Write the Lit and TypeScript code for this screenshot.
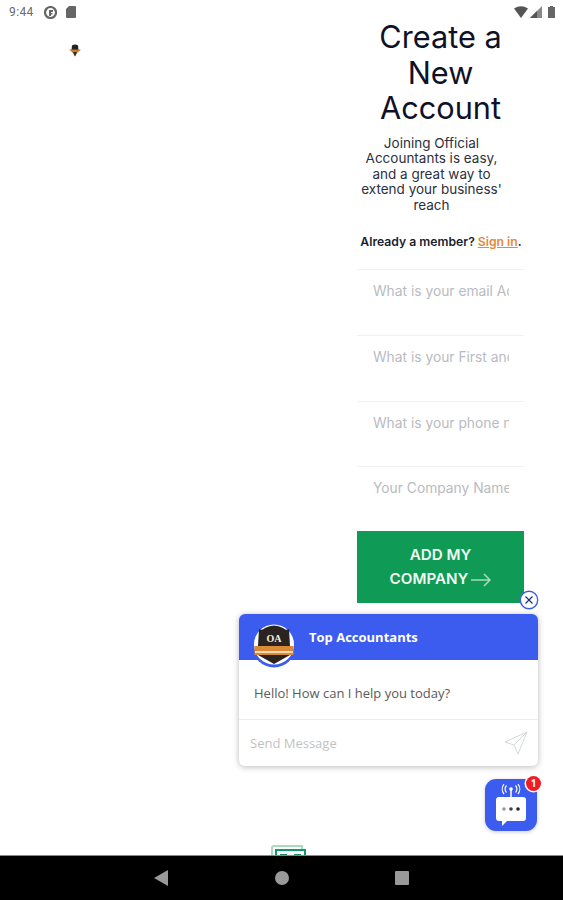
import { LitElement, html, css } from "lit";
import { customElement } from "lit/decorators.js";

@customElement("app-root")
export class AppRoot extends LitElement {
  static styles = css`
    :host { display: block; width: 563px; height: 900px; position: relative; overflow: hidden; background: #fff; font-family: Inter, "Noto Sans", sans-serif; }
    .page { height: 900px; display: flex; flex-direction: column; }
    .status { height: 24px; flex: none; display: flex; align-items: center; justify-content: space-between; padding: 0 8px 0 9px; color: #6a6a6a; box-sizing: border-box; }
    .status-left, .status-right { display: flex; align-items: center; }
    .time { font: 400 12px Roboto, sans-serif; letter-spacing: .4px; margin-right: 10px; }
    .status-left svg { margin-right: 9px; }
    .status-right svg:nth-child(1) { margin-right: 2px; }
    .status-right svg:nth-child(2) { margin-right: 6px; }
    .content { flex: 1; min-height: 0; position: relative; display: flex; justify-content: flex-end; padding-right: 39px; }
    .logo { position: absolute; left: 68px; top: 20px; }
    .money { position: absolute; left: 271px; bottom: -5px; }
    .form { width: 167px; display: flex; flex-direction: column; align-items: stretch; text-align: center; color: #10142a; }
    h1 { margin: -5px 0 0; font: 400 30.700px/35.500px Inter, sans-serif; color: #0f1226; padding: 0 6px; }
    .desc { margin: 10px 0 0; font: 400 13.500px/15.500px Inter, sans-serif; color: #2c3040; padding: 0 21px 0 3px; }
    .member { margin: 21px -6px 0 -6px; font: 600 12.200px/15px Inter, sans-serif; white-space: nowrap; color: #1a1d30; padding-left: 1px; }
    .member a { color: #e8873a; text-decoration: underline; }
    .fields { margin-top: 20px; }
    .field { height: 66px; border-top: 1px solid #f1f1f1; box-sizing: border-box; padding: 13px 15px 0 16px; text-align: left; }
    .field div { font: 400 13.800px/17px Inter, sans-serif; color: #b9bbbf; white-space: nowrap; overflow: hidden; }
    .field.last, .field.tight { height: 65px; }
    button.cta { display: block; width: 167px; height: 72px; border: 0; padding: 0; background: #0f9a55; color: #f2faf5; font: 600 15.200px/24px Inter, sans-serif; }
    .cta svg { vertical-align: -3px; margin-left: 3px; }
    .nav { height: 45px; flex: none; background: #000; border-top: 1px solid #888; box-sizing: border-box; display: flex; align-items: center; justify-content: center; gap: 106px; position: relative; z-index: 2; }
    .close { position: absolute; left: 519px; top: 590px; width: 20px; height: 20px; z-index: 3; }
    .chat { position: absolute; left: 239px; top: 614px; width: 299px; height: 152px; background: #fff; border-radius: 6px; box-shadow: 0 1px 6px rgba(0,0,0,.28); font-family: "Open Sans", sans-serif; display: flex; flex-direction: column; z-index: 1; }
    .chat-head { height: 46px; flex: none; box-sizing: border-box; background: #3c5cf0; border-radius: 6px 6px 0 0; color: #fff; font-weight: 700; font-size: 13px; line-height: 46px; padding-left: 70px; }
    .avatar { position: absolute; left: 13px; top: 10px; width: 44px; height: 44px; }
    .msg { height: 60px; flex: none; box-sizing: border-box; padding: 25px 0 0 15px; border-bottom: 1px solid #eee; font-size: 13px; line-height: 17px; color: #5a5a5a; }
    .input { flex: 1; display: flex; align-items: center; justify-content: space-between; padding: 0 10px 0 11px; font-size: 13px; color: #c2c2c2; }
    .fab { position: absolute; left: 485px; top: 779px; width: 52px; height: 52px; border-radius: 11px; background: #3c5cf0; box-shadow: 0 1px 4px rgba(0,0,0,.2); display: flex; align-items: center; justify-content: center; z-index: 1; }
    .badge { position: absolute; right: -4px; top: -3px; width: 15px; height: 15px; border-radius: 50%; background: #ee1c25; color: #fff; font: 700 10px/15px "Open Sans", sans-serif; text-align: center; box-shadow: 0 0 0 1.500px #fff; }
  `;

  render() {
    return html`
      <div class="page">
        <div class="status">
          <div class="status-left">
            <span class="time">9:44</span>
            <svg width="13" height="13" viewBox="0 0 13 13"><circle cx="6.500" cy="6.500" r="5.500" fill="none" stroke="#666" stroke-width="2.200"/><path d="M5 10V4h4v2H7v1h1.500v1.500H7V10z" fill="#666"/></svg>
            <svg width="10" height="12" viewBox="0 0 10 12"><path d="M3 0h6a1 1 0 0 1 1 1v10a1 1 0 0 1-1 1H1a1 1 0 0 1-1-1V3z" fill="#666"/></svg>
          </div>
          <div class="status-right">
            <svg width="14" height="12" viewBox="0 0 14 12"><path d="M0 2.500Q7-2 14 2.500L7 12z" fill="#555"/></svg>
            <svg width="12" height="12" viewBox="0 0 12 12"><path d="M0 12L12 0v12z" fill="#888"/><path d="M7 5v7H0z" fill="#555"/></svg>
            <svg width="7" height="12" viewBox="0 0 7 12"><path d="M2 0h3v1h2v11H0V1h2z" fill="#666"/></svg>
          </div>
        </div>
        <div class="content">
          <svg class="logo" width="14" height="13" viewBox="0 0 14 13">
            <path d="M4 1.500Q7-.5 10 1.500L10.500 6H3.500z" fill="#222"/>
            <path d="M1 5.500h12L9.500 8.500 7 12.500 4.500 8.500z" fill="#c9772c"/>
            <path d="M5 8h4l-2 4.500z" fill="#333"/>
          </svg>
          <svg class="money" width="36" height="15" viewBox="0 0 36 15">
            <path d="M1 15V3a2 2 0 0 1 2-2h28v3" fill="none" stroke="#a9d9bf" stroke-width="2"/>
            <rect x="5" y="5" width="29" height="12" fill="none" stroke="#0f9a6a" stroke-width="2"/>
            <rect x="9" y="9" width="7" height="6" fill="#1c8a5c"/><rect x="23" y="9" width="7" height="6" fill="#1c8a5c"/>
          </svg>
          <div class="form">
            <h1>Create a New Account</h1>
            <p class="desc">Joining Official Accountants is easy, and a great way to extend your business' reach</p>
            <div class="member">Already a member? <a>Sign in</a>.</div>
            <div class="fields">
              <div class="field"><div>What is your email Address</div></div>
              <div class="field"><div>What is your First and Last Name</div></div>
              <div class="field tight"><div>What is your phone number</div></div>
              <div class="field last"><div>Your Company Name</div></div>
            </div>
            <button class="cta">ADD MY<br />COMPANY<svg width="20" height="14" viewBox="0 0 20 14"><path d="M0 7h19M13 1l6 6-6 6" fill="none" stroke="#a8dcbd" stroke-width="1.500"/></svg></button>
          </div>
        </div>
        <div class="nav">
          <svg width="15" height="16" viewBox="0 0 15 16"><path d="M14 0v16L0 8z" fill="#999"/></svg>
          <svg width="14" height="14" viewBox="0 0 14 14"><circle cx="7" cy="7" r="7" fill="#999"/></svg>
          <svg width="14" height="14" viewBox="0 0 14 14"><rect width="14" height="14" rx="1" fill="#999"/></svg>
        </div>
      </div>

      <svg class="close" viewBox="0 0 20 20"><circle cx="10" cy="10" r="8.700" fill="#fff" stroke="#3c5cf0" stroke-width="1.400"/><path d="M6.500 6.500l7 7M13.500 6.500l-7 7" stroke="#1f2f80" stroke-width="1.200"/></svg>

      <div class="chat">
        <div class="chat-head">Top Accountants</div>
        <svg class="avatar" viewBox="0 0 44 44">
          <circle cx="22" cy="22" r="21.500" fill="#3c5cf0"/>
          <circle cx="22" cy="20.500" r="20" fill="#fff"/>
          <path d="M7 5Q10 7 13 4Q22-1 31 4Q34 7 37 5L38 22H6z" fill="#2b2320"/>
          <path d="M2.500 22H41.500V31H2.500z" fill="#d98a36"/>
          <path d="M3 27H41V29H3z" fill="#f3d9b0"/>
          <path d="M6 31H38L22 40z" fill="#2b2320"/>
          <text x="22" y="18" text-anchor="middle" font-family="Liberation Serif, serif" font-weight="700" font-size="10" fill="#f4f0e8">OA</text>
        </svg>
        <div class="msg">Hello! How can I help you today?</div>
        <div class="input">
          <span>Send Message</span>
          <svg width="24" height="24" viewBox="0 0 24 24"><path d="M1 11L23 1 14 23 10 14zM10 14L23 1" fill="none" stroke="#d5d8d8" stroke-width="1"/></svg>
        </div>
      </div>

      <div class="fab">
        <svg width="34" height="44" viewBox="0 0 34 44">
          <path d="M17 6v8" stroke="#fff" stroke-width="1.500"/>
          <circle cx="17" cy="6" r="1.800" fill="#fff"/>
          <path d="M12.500 2.500a5 5 0 0 0 0 7M21.500 2.500a5 5 0 0 1 0 7M10 1a8 8 0 0 0 0 10M24 1a8 8 0 0 1 0 10" fill="none" stroke="#fff" stroke-width="1.200"/>
          <path d="M5 14h24a3 3 0 0 1 3 3v18a3 3 0 0 1-3 3H13l-5 5v-5H5a3 3 0 0 1-3-3V17a3 3 0 0 1 3-3z" fill="#fff"/>
          <circle cx="10" cy="26" r="1.800" fill="#9a9a9a"/><circle cx="17" cy="26" r="1.800" fill="#444"/><circle cx="24" cy="26" r="1.800" fill="#222"/>
        </svg>
        <div class="badge">1</div>
      </div>
    `;
  }
}
